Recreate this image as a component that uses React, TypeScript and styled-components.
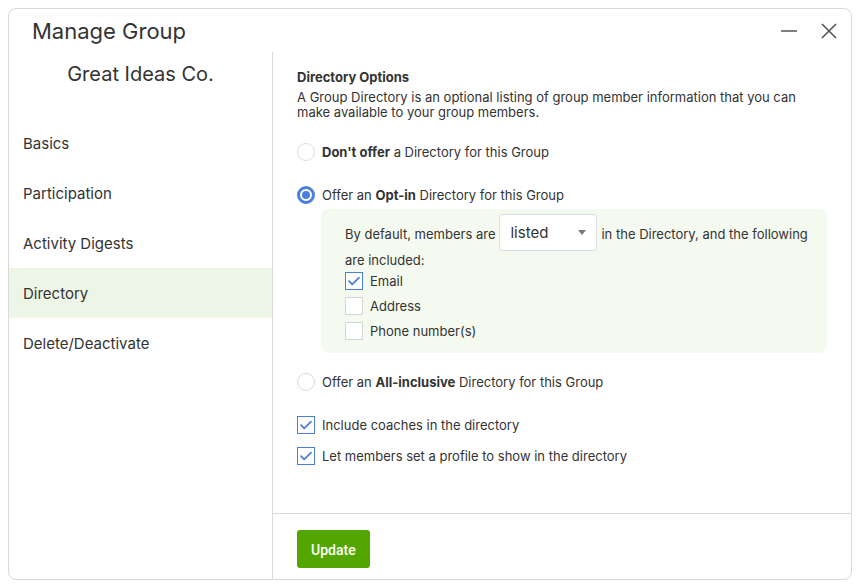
import styled, { createGlobalStyle } from "styled-components";

const GlobalStyle = createGlobalStyle`
  body {
    margin: 0;
    background: #fff;
    font-family: Inter, "Noto Sans", sans-serif;
    color: #333;
  }
  * {
    box-sizing: border-box;
  }
`;

const Page = styled.div`
  width: 860px;
  height: 586px;
  padding: 8px;
`;

const Dialog = styled.div`
  width: 844px;
  height: 572px;
  border: 1px solid #d9d9d9;
  border-radius: 8px;
  display: flex;
  flex-direction: column;
  overflow: hidden;
`;

const Header = styled.div`
  height: 43px;
  display: flex;
  align-items: center;
  padding: 0 2px 0 23px;
  flex-shrink: 0;
`;

const Title = styled.h1`
  margin: 0;
  flex: 1;
  font-size: 22px;
  font-weight: 400;
  color: #333;
`;

const IconButton = styled.button`
  width: 40px;
  height: 40px;
  border: 0;
  background: none;
  padding: 0;
  display: flex;
  align-items: center;
  justify-content: center;
`;

const Body = styled.div`
  flex: 1;
  display: flex;
  min-height: 0;
`;

const Sidebar = styled.nav`
  width: 264px;
  flex-shrink: 0;
  border-right: 1px solid #d9d9d9;
  display: flex;
  flex-direction: column;
`;

const OrgName = styled.div`
  text-align: center;
  font-size: 20px;
  padding-top: 10px;
  height: 66px;
  color: #333;
`;

const NavItem = styled.div<{ $active?: boolean }>`
  height: 50px;
  display: flex;
  align-items: center;
  padding-left: 14px;
  font-size: 15px;
  color: #333;
  background: ${(p) => (p.$active ? "#edf6e6" : "transparent")};
`;

const Main = styled.div`
  flex: 1;
  display: flex;
  flex-direction: column;
`;

const Content = styled.div`
  flex: 1;
  padding: 17px 24px 0;
`;

const SectionTitle = styled.h2`
  margin: 0 0 5px;
  font-size: 13px;
  font-weight: 700;
  color: #333;
`;

const Description = styled.p`
  margin: 0 0 22px;
  font-size: 13px;
  line-height: 15px;
  color: #333;
  max-width: 510px;
`;

const Option = styled.label<{ $gap?: number }>`
  display: flex;
  align-items: center;
  gap: 7px;
  font-size: 13px;
  color: #333;
  height: 20px;
  margin-bottom: ${(p) => p.$gap ?? 0}px;
`;

const Radio = styled.span<{ $checked?: boolean }>`
  width: 18px;
  height: 18px;
  border-radius: 50%;
  flex-shrink: 0;
  border: ${(p) => (p.$checked ? "3px solid #4a7fde" : "1px solid #dcdcdc")};
  background: #fff;
  display: flex;
  align-items: center;
  justify-content: center;
  &::after {
    content: "";
    display: ${(p) => (p.$checked ? "block" : "none")};
    width: 8px;
    height: 8px;
    border-radius: 50%;
    background: #4a7fde;
  }
`;

const CheckBox = styled.span<{ $checked?: boolean }>`
  width: 18px;
  height: 18px;
  flex-shrink: 0;
  border: 1px solid ${(p) => (p.$checked ? "#4a7fde" : "#d6d6d6")};
  background: #fff;
  display: flex;
  align-items: center;
  justify-content: center;
`;

const OptInPanel = styled.div`
  margin: 4px 0 19px 24px;
  background: #f5faf0;
  border-radius: 8px;
  padding: 5px 10px 12px 24px;
`;

const DefaultRow = styled.div`
  display: flex;
  align-items: center;
  height: 37px;
  font-size: 13px;
  color: #333;
  padding-top: 2px;
`;

const IncludedLabel = styled.div`
  font-size: 13px;
  line-height: 20px;
  margin: -1px 0 1px;
  color: #333;
`;

const SelectBox = styled.span`
  display: flex;
  align-items: center;
  justify-content: space-between;
  width: 98px;
  height: 37px;
  margin: -2px 4px 0 4px;
  padding: 0 10px;
  background: #fff;
  border: 1px solid #dcdcdc;
  border-radius: 3px;
  font-size: 15px;
  color: #333;
`;

const Caret = styled.span`
  width: 0;
  height: 0;
  border-left: 4px solid transparent;
  border-right: 4px solid transparent;
  border-top: 5px solid #777;
`;

const SubList = styled.div`
  display: flex;
  flex-direction: column;
  gap: 5px;
`;

const Footer = styled.div`
  height: 66px;
  border-top: 1px solid #d9d9d9;
  padding: 16px 24px 0;
  flex-shrink: 0;
`;

const UpdateButton = styled.button`
  height: 38px;
  padding: 0 14px;
  background: #53a600;
  color: #fff;
  border: 0;
  border-radius: 3px;
  font-family: Roboto, "Noto Sans", sans-serif;
  font-size: 14px;
  font-weight: 500;
  padding-top: 1px;
`;

const Check = () => (
  <svg width="14" height="14" viewBox="0 0 14 14" fill="none">
    <path d="M2 7.2l3.2 3.2L12 3.6" stroke="#4a7fde" strokeWidth="1.8" strokeLinecap="round" strokeLinejoin="round" />
  </svg>
);

function Box({ checked }: { checked?: boolean }) {
  return <CheckBox $checked={checked}>{checked && <Check />}</CheckBox>;
}

const navItems = ["Basics", "Participation", "Activity Digests", "Directory", "Delete/Deactivate"];

export default function App() {
  return (
    <>
      <GlobalStyle />
      <Page>
        <Dialog>
          <Header>
            <Title>Manage Group</Title>
            <IconButton aria-label="Minimize">
              <svg width="18" height="18" viewBox="0 0 18 18">
                <path d="M1 9h16" stroke="#555" strokeWidth="1.6" />
              </svg>
            </IconButton>
            <IconButton aria-label="Close">
              <svg width="18" height="18" viewBox="0 0 18 18">
                <path d="M2 2l14 14M16 2L2 16" stroke="#555" strokeWidth="1.6" />
              </svg>
            </IconButton>
          </Header>
          <Body>
            <Sidebar>
              <OrgName>Great Ideas Co.</OrgName>
              {navItems.map((item) => (
                <NavItem key={item} $active={item === "Directory"}>
                  {item}
                </NavItem>
              ))}
            </Sidebar>
            <Main>
              <Content>
                <SectionTitle>Directory Options</SectionTitle>
                <Description>
                  A Group Directory is an optional listing of group member information that you can make available
                  to your group members.
                </Description>
                <Option $gap={23}>
                  <Radio />
                  <span>
                    <b>Don't offer</b> a Directory for this Group
                  </span>
                </Option>
                <Option>
                  <Radio $checked />
                  <span>
                    Offer an <b>Opt-in</b> Directory for this Group
                  </span>
                </Option>
                <OptInPanel>
                  <DefaultRow>
                    <span>By default, members are</span>
                    <SelectBox>
                      listed
                      <Caret />
                    </SelectBox>
                    <span>in the Directory, and the following</span>
                  </DefaultRow>
                  <IncludedLabel>are included:</IncludedLabel>
                  <SubList>
                    <Option>
                      <Box checked />
                      Email
                    </Option>
                    <Option>
                      <Box />
                      Address
                    </Option>
                    <Option>
                      <Box />
                      Phone number(s)
                    </Option>
                  </SubList>
                </OptInPanel>
                <Option $gap={23}>
                  <Radio />
                  <span>
                    Offer an <b>All-inclusive</b> Directory for this Group
                  </span>
                </Option>
                <Option $gap={11}>
                  <Box checked />
                  Include coaches in the directory
                </Option>
                <Option>
                  <Box checked />
                  Let members set a profile to show in the directory
                </Option>
              </Content>
              <Footer>
                <UpdateButton>Update</UpdateButton>
              </Footer>
            </Main>
          </Body>
        </Dialog>
      </Page>
    </>
  );
}
